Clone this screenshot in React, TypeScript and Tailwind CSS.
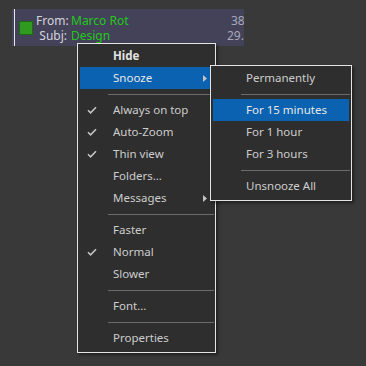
import React from 'react';

type Item =
  | { kind: 'sep' }
  | { kind: 'item'; label: string; checked?: boolean; bold?: boolean; active?: boolean; sub?: boolean };

const mainItems: Item[] = [
  { kind: 'item', label: 'Hide', bold: true },
  { kind: 'item', label: 'Snooze', active: true, sub: true },
  { kind: 'sep' },
  { kind: 'item', label: 'Always on top', checked: true },
  { kind: 'item', label: 'Auto-Zoom', checked: true },
  { kind: 'item', label: 'Thin view', checked: true },
  { kind: 'item', label: 'Folders...' },
  { kind: 'item', label: 'Messages', sub: true },
  { kind: 'sep' },
  { kind: 'item', label: 'Faster' },
  { kind: 'item', label: 'Normal', checked: true },
  { kind: 'item', label: 'Slower' },
  { kind: 'sep' },
  { kind: 'item', label: 'Font...' },
  { kind: 'sep' },
  { kind: 'item', label: 'Properties' },
];

const snoozeItems: Item[] = [
  { kind: 'item', label: 'Permanently' },
  { kind: 'sep' },
  { kind: 'item', label: 'For 15 minutes', active: true },
  { kind: 'item', label: 'For 1 hour' },
  { kind: 'item', label: 'For 3 hours' },
  { kind: 'sep' },
  { kind: 'item', label: 'Unsnooze All' },
];

function Check() {
  return (
    <svg width="10" height="8" viewBox="0 0 10 8">
      <path d="M1 4.2 L3.6 6.8 L9 1.2" fill="none" stroke="#c4c4c4" strokeWidth="1.6" />
    </svg>
  );
}

function Arrow() {
  return (
    <svg width="4" height="7" viewBox="0 0 4 7">
      <path d="M0 0 L4 3.5 L0 7 Z" fill="#c4c4c4" />
    </svg>
  );
}

function MenuRow({ item }: { item: Item }) {
  if (item.kind === 'sep') {
    return (
      <div className="h-[10px] flex items-center pl-[28px] -mr-[1px]">
        <div className="h-px w-full bg-[#6b6b6b]" />
      </div>
    );
  }
  return (
    <div
      className={`h-[22px] flex items-center ${item.active ? 'bg-[#0a62b0] text-[#e8e8e8]' : 'text-[#cdcdcd]'}`}
    >
      <div className="w-[33px] pl-[7px] flex items-center">{item.checked && <Check />}</div>
      <span className={item.bold ? 'font-bold text-[#e2e2e2]' : ''}>{item.label}</span>
      {item.sub && (
        <div className="ml-auto mr-[6px] flex items-center">
          <Arrow />
        </div>
      )}
    </div>
  );
}

function Menu({ items, className }: { items: Item[]; className: string }) {
  return (
    <div
      className={`absolute border border-[#e4e4e4] bg-[#2e2e2e] px-[2px] pt-[1px] pb-[3px] text-[11.5px] shadow-[2px_2px_3px_rgba(0,0,0,0.45)] ${className}`}
    >
      {items.map((it, i) => (
        <MenuRow key={i} item={it} />
      ))}
    </div>
  );
}

export default function App() {
  return (
    <div
      className="relative w-[366px] h-[366px] bg-[#393939] pt-[9px] overflow-hidden"
      style={{ fontFamily: '"Noto Sans", "Open Sans", sans-serif' }}
    >
      <div className="ml-[12px] w-[232px] h-[37px] flex bg-[#444259] overflow-hidden text-[12px] leading-[15px] whitespace-nowrap">
        <div className="w-[2px] shrink-0" />
        <div className="w-px shrink-0 bg-[#e6e6e6]" />
        <div className="pl-[4px] shrink-0 flex items-center">
          <div className="w-[14px] h-[14px] bg-[#2f9a1f] border border-[#1d6a12]" />
        </div>
        <div className="pl-[3px] w-[194px] shrink-0 flex flex-col justify-center">
          <div className="flex">
            <span className="w-[31px] text-right text-[#d4d4dc]">From:</span>
            <span className="pl-[4px] text-[#22c81a]">Marco Rot</span>
          </div>
          <div className="flex">
            <span className="w-[31px] text-right text-[#d4d4dc]">Subj:</span>
            <span className="pl-[4px] text-[#22c81a]">Design</span>
          </div>
        </div>
        <div className="shrink-0 flex flex-col justify-center text-[#a9a9bb]">
          <span className="pl-[4px]">38</span>
          <span>29.06.2021</span>
        </div>
      </div>

      <Menu items={mainItems} className="left-[77px] top-[43px] w-[139px]" />
      <Menu items={snoozeItems} className="left-[210px] top-[65px] w-[142px]" />
    </div>
  );
}
